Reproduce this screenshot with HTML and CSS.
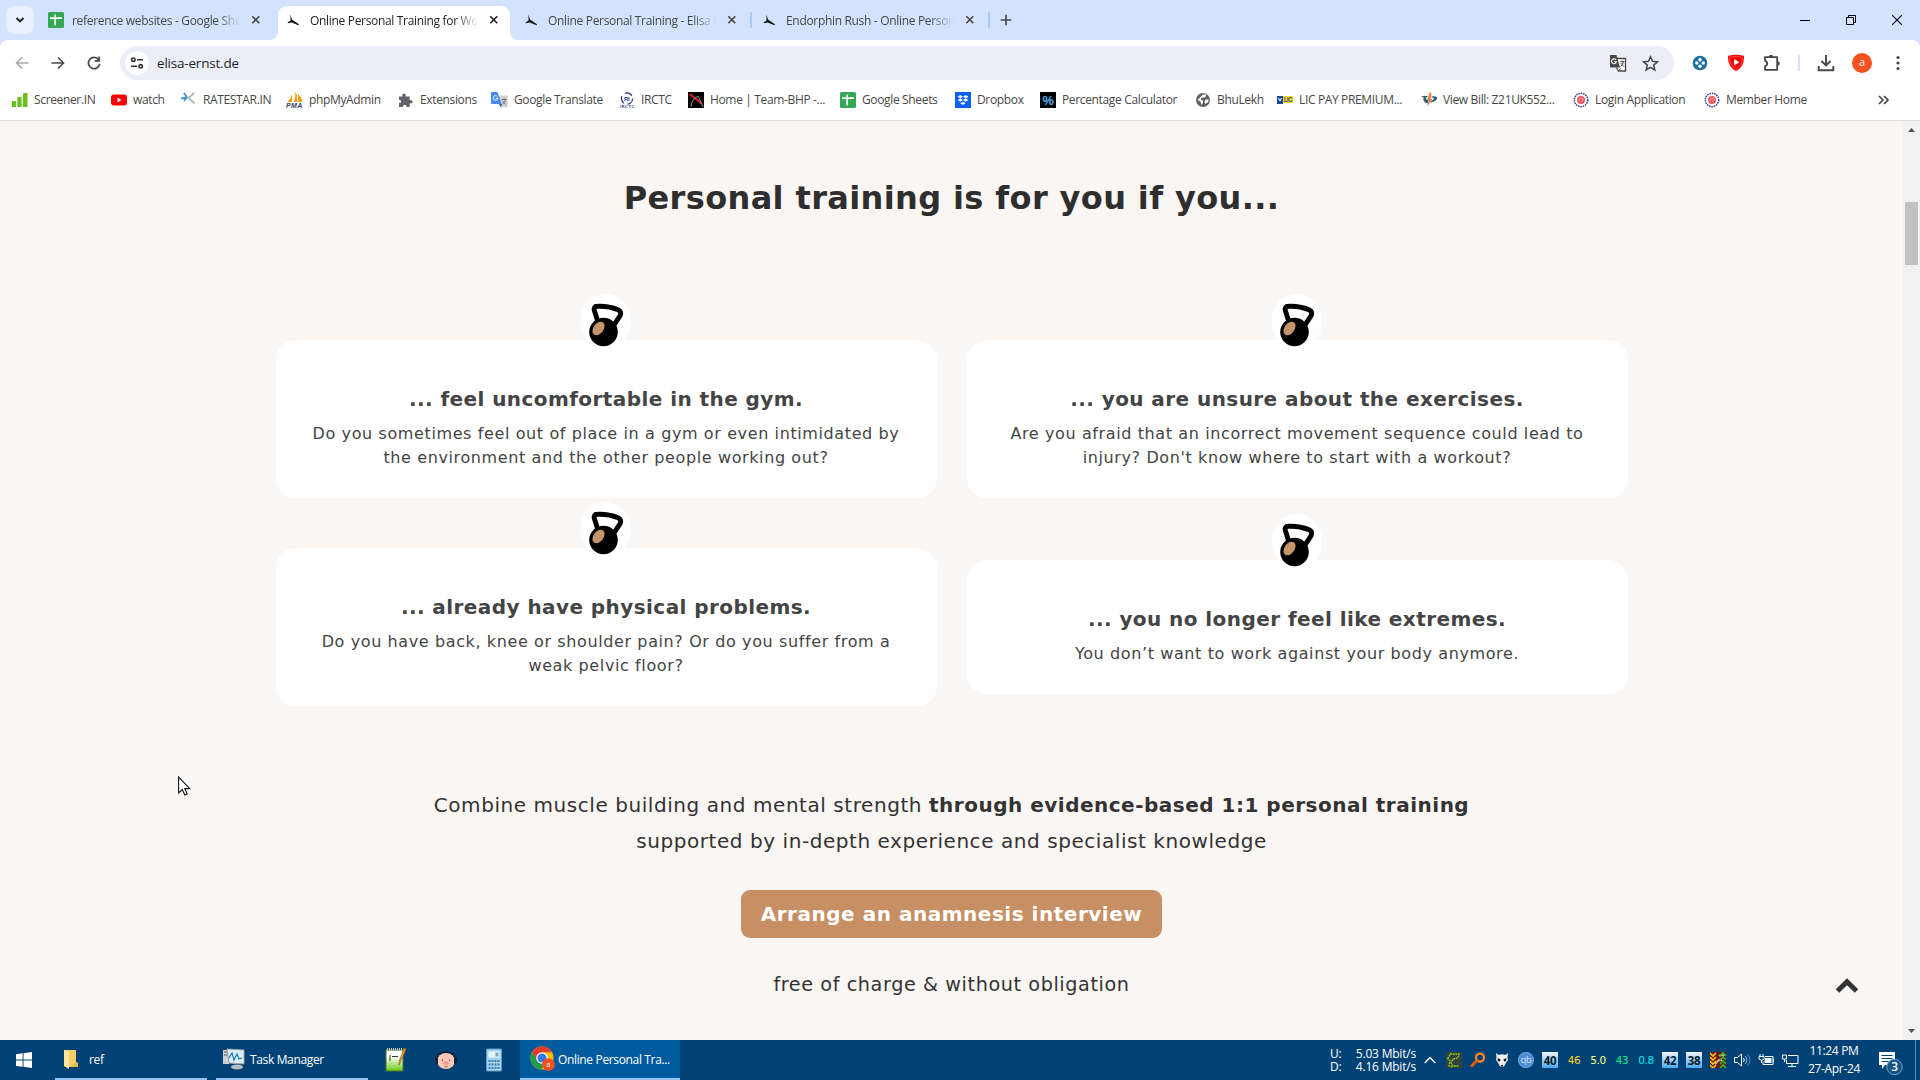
FILE: index.html
```
<!DOCTYPE html>
<html lang="en">
<head>
<meta charset="utf-8">
<title>Online Personal Training for Women</title>
<link rel="stylesheet" href="styles.css">
</head>
<body>
<svg class="defs" width="0" height="0">
  <symbol id="sheets" viewBox="0 0 16 16"><rect width="16" height="16" rx="1.5" fill="#34a853"/><path d="M7.2 2.5v11M2 6.2h12" stroke="#fff" stroke-width="1.7"/></symbol>
  <symbol id="elisa" viewBox="0 0 16 16"><path d="M4.500 2.500L6 7.500 13 12.200 12.500 13.200 5.500 10.500 2 11.300 1.500 10.500 4.500 8.500z" fill="#181818"/></symbol>
  <symbol id="close" viewBox="0 0 10 10"><path d="M1.300 1.300l7 7M8.300 1.300l-7 7" stroke="currentColor" stroke-width="1.600"/></symbol>
  <symbol id="kettlebell" viewBox="0 0 50 54"><path d="M17 28L13.500 17q-1.500-4.700 3-4.700 11-.5 20.500 3.500 4 2 2 6l-6 9" fill="none" stroke="#000" stroke-width="4.900" stroke-linejoin="round"/><circle cx="22.500" cy="38" r="14.300"/><ellipse cx="17.500" cy="34.500" rx="5" ry="7.600" transform="rotate(37 17.500 34.500)" fill="#c4966a"/></symbol>
  <symbol id="seal" viewBox="0 0 16 16"><circle cx="8" cy="8" r="6.700" fill="#fff" stroke="#27408b" stroke-width="1.500" stroke-dasharray="1.500 .9"/><circle cx="8" cy="8" r="4" fill="#ee5560"/><path d="M5.500 9l2-3 3 1-2.500 3" stroke="#fff" stroke-opacity=".6" fill="none" stroke-width=".8"/></symbol>
</svg>

<header class="browser">
  <div class="tabstrip">
    <div class="tab-search"><svg width="10" height="10" viewBox="0 0 10 10"><path d="M1.500 3l3.500 3.500L8.500 3" fill="none" stroke="#1f1f1f" stroke-width="1.900"/></svg></div>
    <div class="tab tab-first"><svg width="16" height="16"><use href="#sheets"/></svg><span class="tab-title">reference websites - Google Sheets</span><svg class="x" width="10" height="10"><use href="#close"/></svg></div>
    <div class="tab tab-active"><svg width="16" height="16"><use href="#elisa"/></svg><span class="tab-title">Online Personal Training for Women</span><svg class="x" width="10" height="10"><use href="#close"/></svg></div>
    <div class="tab"><svg width="16" height="16"><use href="#elisa"/></svg><span class="tab-title">Online Personal Training - Elisa Ernst</span><svg class="x" width="10" height="10"><use href="#close"/></svg></div>
    <div class="tab-sep"></div>
    <div class="tab tab-last"><svg width="16" height="16"><use href="#elisa"/></svg><span class="tab-title">Endorphin Rush - Online Personal</span><svg class="x" width="10" height="10"><use href="#close"/></svg></div>
    <div class="tab-sep"></div>
    <svg class="new-tab" width="12" height="12" viewBox="0 0 12 12"><path d="M6 .7v10.600M.7 6h10.600" stroke="#474747" stroke-width="1.700"/></svg>
    <div class="window-controls">
      <svg width="10" height="10" viewBox="0 0 10 10"><path d="M0 5.500h10" stroke="#000"/></svg>
      <svg width="10" height="10" viewBox="0 0 10 10"><path d="M.5 2.500h7v7h-7zM2.500 2.500v-2h7v7h-2" fill="none" stroke="#000"/></svg>
      <svg width="10" height="10" viewBox="0 0 10 10"><path d="M0 0l10 10M10 0L0 10" stroke="#000" stroke-width="1.100"/></svg>
    </div>
  </div>

  <div class="toolbar">
    <div class="nav">
      <svg width="16" height="16" viewBox="0 0 16 16"><path d="M14.500 8H2.500M8 2.500L2.500 8 8 13.500" fill="none" stroke="#a5a7aa" stroke-width="1.500"/></svg>
      <svg width="16" height="16" viewBox="0 0 16 16"><path d="M1.500 8h12M8 2.500L13.500 8 8 13.500" fill="none" stroke="#474747" stroke-width="1.600"/></svg>
      <svg width="16" height="16" viewBox="0 0 16 16"><path d="M12.600 4.800A5.600 5.600 0 1 0 13.600 8.800" fill="none" stroke="#474747" stroke-width="1.700"/><path d="M13.900 1.500v5.200H8.700V5h3.500V1.500z" fill="#474747"/></svg>
    </div>
    <div class="omnibox">
      <div class="site-info"><svg width="14" height="14" viewBox="0 0 14 14" fill="none" stroke="#303134" stroke-width="1.600"><circle cx="3.300" cy="3.700" r="1.700"/><path d="M7 3.700h6M1 10.300h6"/><circle cx="10.700" cy="10.300" r="1.700"/></svg></div>
      <span class="url">elisa-ernst.de</span>
      <svg class="omni-translate" width="18" height="18" viewBox="0 0 18 18"><path d="M7 4.500h9.500V17H9.500L7.500 13.500" fill="#fff" stroke="#474747" stroke-width="1.300"/><path d="M1 1h6.500l3.500 12.500H2q-1 0-1-1z" fill="#474747"/><path d="M7 6A2.400 2.400 0 1 0 7.300 7.800H5.200" fill="none" stroke="#fff" stroke-width="1.100"/><path d="M11 7.700h4.500M13.200 6.700v1M14.500 8q-.8 3-3 4.500M11.700 9l3.300 3.700M10 16.500l1.500-2" fill="none" stroke="#474747"/></svg>
      <svg width="17" height="17" viewBox="0 0 17 17"><path d="M8.500 1.800l2 4.500 5 .5-3.800 3.300 1.100 4.900-4.300-2.600L4.200 15l1.100-4.900L1.500 6.800l5-.5z" fill="none" stroke="#474747" stroke-width="1.500"/></svg>
    </div>
    <div class="actions">
      <svg width="16" height="16" viewBox="0 0 16 16"><circle cx="8" cy="8" r="7.300" fill="#216f9e"/><g fill="#fff"><circle cx="8" cy="4.800" r="1.700"/><circle cx="8" cy="11.200" r="1.700"/><circle cx="4.800" cy="8" r="1.700"/><circle cx="11.200" cy="8" r="1.700"/></g></svg>
      <svg width="18" height="18" viewBox="0 0 18 18"><path d="M1 2q8-2.500 16 0 .5 10.500-8 15Q.5 12.500 1 2z" fill="#f90000"/><path d="M2.600 3.200q6.400-1.700 12.800 0 .2 8-6.400 12Q2.400 11.200 2.600 3.200z" fill="none" stroke="#ff7777" stroke-width=".6"/><path d="M7 5l5.500 3.300L7 11.600z" fill="#fff"/></svg>
      <svg width="18" height="18" viewBox="0 0 18 18"><path d="M2 3.200h12.200v12.600H2v-3.600q2.200-.6 2.200-2.700T2 6.800z" fill="none" stroke="#474747" stroke-width="1.800" stroke-linejoin="round"/><path d="M5.800 3q0-2.200 2.200-2.200T10.200 3zM14.500 7.300q2.200 0 2.200 2.200t-2.200 2.200z" fill="#474747"/></svg>
      <i class="action-sep"></i>
      <svg width="18" height="18" viewBox="0 0 18 18"><path d="M9 1v10M4.500 7L9 11.500 13.500 7M1.700 12v4.200h14.600V12" fill="none" stroke="#474747" stroke-width="1.900"/></svg>
      <span class="avatar">a</span>
      <svg width="6" height="16" viewBox="0 0 6 16" fill="#474747"><circle cx="3" cy="2.500" r="1.600"/><circle cx="3" cy="8" r="1.600"/><circle cx="3" cy="13.500" r="1.600"/></svg>
    </div>
  </div>

  <nav class="bookmarks">
    <a class="bm"><svg width="16" height="16" viewBox="0 0 16 16" fill="#65c31c"><rect y="9" width="4" height="6" rx=".6"/><rect x="5.300" y="5" width="4.300" height="10" rx=".6"/><rect x="11" y="1" width="4.500" height="14" rx=".6"/></svg><span>Screener.IN</span></a>
    <a class="bm"><svg width="16" height="16" viewBox="0 0 16 16"><rect y="2.500" width="16" height="11" rx="3" fill="#f00"/><path d="M6.500 5.500l4 2.500-4 2.500z" fill="#fff"/></svg><span>watch</span></a>
    <a class="bm"><svg width="16" height="16" viewBox="0 0 16 16"><path d="M3 1l3 4.500L3 9M5.500 5.500L0 6.500" fill="none" stroke="#3b9bd3" stroke-width="1.800"/><path d="M13 1L7.500 6l6 5.500" fill="none" stroke="#b3b8bd" stroke-width="2"/></svg><span>RATESTAR.IN</span></a>
    <a class="bm"><svg width="17" height="16" viewBox="0 0 17 16"><path d="M6 2v8H1q4-3 5-8zM9 0q1 5-1 10h3V3zM12 2q4 3 4 8h-4z" fill="#f89c0e"/><text x="0" y="15.500" font-family="Liberation Sans" font-size="7" font-weight="700" font-style="italic" fill="#39396b" textLength="16">PMA</text></svg><span>phpMyAdmin</span></a>
    <a class="bm"><svg width="16" height="16" viewBox="0 0 16 16"><path d="M1 4.500h3.500Q4 1.500 6 1.500t1.700 3h4V8q3 0 3 1.700t-3 1.700v3.600H8.500q0-2.300-1.700-2.300T5 15H1v-4q2.200 0 2.200-1.600T1 7.700z" fill="#5f6368"/></svg><span>Extensions</span></a>
    <a class="bm"><svg width="17" height="16" viewBox="0 0 17 16"><path d="M7 3.500h9q.8 0 .8.800v11H9.500z" fill="#d3d3d3"/><path d="M1 0h5.500l4 12H1q-1 0-1-1V1q0-1 1-1z" fill="#4788f2"/><path d="M8 12h3l-1.500 3.500z" fill="#3060bd"/><path d="M6.300 4.500A2.300 2.300 0 1 0 6.800 6.300H4.700" fill="none" stroke="#fff"/><path d="M10.500 7.500h5M13 6.300v1.200M14.500 8q-1 2.700-3 4M11.500 9l3 3.500" fill="none" stroke="#647078"/></svg><span>Google Translate</span></a>
    <a class="bm"><svg width="16" height="16" viewBox="0 0 16 16"><circle cx="8" cy="6.500" r="5.600" fill="none" stroke="#32368c" stroke-width="1.200" stroke-dasharray="8 3.700"/><text x="5" y="8.500" font-family="Liberation Sans" font-size="6" font-weight="700" fill="#32368c">RI</text><text x="1" y="16" font-family="Liberation Sans" font-size="4" font-weight="700" fill="#32368c" textLength="14">IRCTC</text></svg><span>IRCTC</span></a>
    <a class="bm"><svg width="16" height="16" viewBox="0 0 16 16"><path d="M0 0h16v16H0z"/><path d="M2 2l12 10" stroke="#e41b23" stroke-width="2.200"/><path d="M10 4Q3 8 3 15M10 4q2 4 5 11" stroke="#8b8b8b" fill="none"/></svg><span>Home | Team-BHP -...</span></a>
    <a class="bm"><svg width="16" height="16"><use href="#sheets"/></svg><span>Google Sheets</span></a>
    <a class="bm"><svg width="16" height="16" viewBox="0 0 16 16"><path d="M0 0h16v16H0z" fill="#0a5fff"/><path d="M5.300 3L8 4.700 5.300 6.400 2.600 4.700zM10.700 3l2.700 1.700-2.700 1.700L8 4.700zM5.300 6.400L8 8.100 5.300 9.800 2.600 8.100zM10.700 6.400l2.700 1.700-2.700 1.700L8 8.100zM8 9.700l2.600 1.600L8 13l-2.600-1.700z" fill="#fff"/></svg><span>Dropbox</span></a>
    <a class="bm"><svg width="16" height="16" viewBox="0 0 16 16"><path d="M0 0h16v16H0z"/><text x="2.500" y="12.500" font-family="Liberation Sans" font-size="13" fill="#52b4ee" font-weight="700" textLength="11" lengthAdjust="spacingAndGlyphs">%</text></svg><span>Percentage Calculator</span></a>
    <a class="bm"><svg width="16" height="16" viewBox="0 0 16 16"><circle cx="8" cy="8" r="7" fill="#5f6368"/><path d="M8 2.500h3.500L10 5.500H7L5.500 7.500 8 8.500v2L6.500 13 5.500 9.500 2.500 8M10.500 7.500h3v2l-3 2.500-1-2z" fill="#fff"/></svg><span>BhuLekh</span></a>
    <a class="bm"><svg width="16" height="16" viewBox="0 0 16 16"><path d="M0 4h6v8H0z" fill="#164c95"/><path d="M6 4h10v7H6z" fill="#f7d616"/><path d="M1.500 6l1.500 3 1.500-3" fill="none" stroke="#fff"/><text x="7" y="10" font-family="Liberation Sans" font-size="6.500" font-weight="700" fill="#164c95" textLength="8" lengthAdjust="spacingAndGlyphs">LIC</text></svg><span>LIC PAY PREMIUM...</span></a>
    <a class="bm"><svg width="16" height="16" viewBox="0 0 16 16"><path d="M0 4h7L5.500 5.500H4.500q1 3 3.500 3l-1.500 3-2.500-1Q1.500 8 2.500 5.500zM10 4.500q6-1 6 1.500 0 3-6 4.500l-1-1q4-1.500 4-3z" fill="#2b6078"/><path d="M9 0L6 8h2l-2 7 5.500-8h-2l1-5z" fill="#fa8038"/></svg><span>View Bill: Z21UK552...</span></a>
    <a class="bm"><svg width="16" height="16"><use href="#seal"/></svg><span>Login Application</span></a>
    <a class="bm"><svg width="16" height="16"><use href="#seal"/></svg><span>Member Home</span></a>
    <svg class="overflow" width="11" height="10" viewBox="0 0 11 10"><path d="M1 1l4 4-4 4M6 1l4 4-4 4" fill="none" stroke="#474747" stroke-width="1.700"/></svg>
  </nav>
</header>

<div class="viewport">
  <main class="page">
    <h1>Personal training is for you if you...</h1>
    <section class="cards">
      <article class="card"><span class="badge"><svg width="50" height="54"><use href="#kettlebell"/></svg></span><h2>... feel uncomfortable in the gym.</h2><p>Do you sometimes feel out of place in a gym or even intimidated by<br>the environment and the other people working out?</p></article>
      <article class="card"><span class="badge"><svg width="50" height="54"><use href="#kettlebell"/></svg></span><h2>... you are unsure about the exercises.</h2><p>Are you afraid that an incorrect movement sequence could lead to<br>injury? Don't know where to start with a workout?</p></article>
      <article class="card"><span class="badge"><svg width="50" height="54"><use href="#kettlebell"/></svg></span><h2>... already have physical problems.</h2><p>Do you have back, knee or shoulder pain? Or do you suffer from a<br>weak pelvic floor?</p></article>
      <article class="card"><span class="badge"><svg width="50" height="54"><use href="#kettlebell"/></svg></span><h2>... you no longer feel like extremes.</h2><p>You don’t want to work against your body anymore.</p></article>
    </section>
    <p class="lead">Combine muscle building and mental strength <b>through evidence-based 1:1 personal training</b><br>supported by in-depth experience and specialist knowledge</p>
    <a class="cta">Arrange an anamnesis interview</a>
    <p class="note">free of charge &amp; without obligation</p>
    <svg class="to-top" width="24" height="16" viewBox="0 0 24 16"><path d="M2.500 13L12 3.700 21.500 13" fill="none" stroke="#333" stroke-width="5"/></svg>
    <svg class="cursor" width="14" height="21" viewBox="0 0 14 21"><path d="M.6 1v16l3.700-3.500L6.800 19l2.400-1.100-2.400-5.300h5z" fill="#fff" stroke="#14141e" stroke-width="1.100"/></svg>
  </main>
  <div class="scrollbar">
    <svg width="7" height="4" viewBox="0 0 7 4"><path d="M0 4l3.500-4L7 4z" fill="#505050"/></svg>
    <div class="thumb"></div>
    <svg class="down" width="7" height="4" viewBox="0 0 7 4"><path d="M0 0l3.500 4L7 0z" fill="#505050"/></svg>
  </div>
</div>

<footer class="taskbar">
  <div class="start"><svg width="16" height="16" viewBox="0 0 16 16" fill="#fff"><path d="M0 2.200L6.600 1.300v6.300H0zM7.500 1.200L16 0v7.600H7.500zM0 8.500h6.600v6.300L0 13.900zM7.500 8.500H16V16l-8.500-1.200z"/></svg></div>
  <div class="task task-ref"><svg width="16" height="22" viewBox="0 0 16 22"><path d="M1 2h12v12l2 1v4H6L1 18z" fill="#f5cf6a"/><path d="M1 2l5 2v17l-5-3z" fill="#ffe69a"/><path d="M13 14l2 1v4H7z" fill="#e8b94c"/></svg><span>ref</span></div>
  <div class="task task-manager"><svg width="24" height="24" viewBox="0 0 24 24"><path d="M1 3h6v14H1z" fill="#cfd2d5"/><path d="M2 5h3M2 8h3" stroke="#555"/><path d="M5 2l17 1v14l-15-1z" fill="#e9eef2" stroke="#99a3aa"/><path d="M7 4l13 1v10L8 14z" fill="#d5eefa"/><path d="M7 11l3-5 2 7 3-6 2 5 3-1" fill="none" stroke="#2178b5" stroke-width="1.200"/><ellipse cx="15" cy="20" rx="6" ry="2.500" fill="#b9bdc0"/></svg><span>Task Manager</span></div>
  <div class="quick">
    <svg width="24" height="26" viewBox="0 0 24 26"><defs><linearGradient id="npp" x2="0" y2="1"><stop offset=".3" stop-color="#fff"/><stop offset="1" stop-color="#6ac811"/></linearGradient></defs><path d="M2 3h17v21H2z" fill="url(#npp)" stroke="#52702c"/><path d="M3 2h15" stroke="#ccc" stroke-width="2" stroke-dasharray="1 1"/><path d="M6 8v6M8 9.500h6" stroke="#333"/><path d="M22 2l-6 14-1 2v-3L20 1z" fill="#f3aa33" stroke="#925a20" stroke-width=".7"/></svg>
    <svg width="24" height="24" viewBox="0 0 24 24"><path d="M3 11C5 2 19 2 21 11" fill="none" stroke="#0c1d33" stroke-width="2"/><ellipse cx="12" cy="13" rx="9" ry="8" fill="#fac9b5"/><path d="M1 10q2-2 3 0v6q-3 1-3-6zM23 10q-2-2-3 0v6q3 1 3-6z" fill="#12243b"/><path d="M8.500 11.500v1.500M15.500 11.500v1.500" stroke="#6c3b33" fill="none"/><ellipse cx="12" cy="15" rx="3" ry="1.800" fill="#f19a91"/><path d="M10.500 18.500q1.500 1 3 0" stroke="#a85349" fill="none"/></svg>
    <svg width="18" height="24" viewBox="0 0 18 24"><rect x=".5" y="1" width="15" height="22" rx="1" fill="#a8d3ee" stroke="#5b9dc6"/><path d="M2.500 3.500h11v6h-11z" fill="#e6f6ff"/><path d="M9.500 4.500h3v4h-3z" fill="#79a2bc"/><path d="M2.500 13h11M2.500 16.500h11M2.500 20h11" stroke="#397eac" stroke-width="2" stroke-dasharray="2 1"/></svg>
  </div>
  <div class="task task-chrome"><svg width="26" height="26" viewBox="0 0 26 26"><circle cx="12" cy="12" r="11.500" fill="#fbbc05"/><path d="M2 6.300A11.500 11.500 0 0 1 22 6.300H12L7 14.500z" fill="#e33b2e"/><path d="M2 6.300A11.500 11.500 0 0 0 11.500 23.500l5-8.500-9-1z" fill="#219b4a"/><circle cx="12" cy="12" r="5.800" fill="#fff"/><circle cx="12" cy="12" r="4.600" fill="#3979e5"/><circle cx="18.500" cy="18.500" r="6.300" fill="#f4511e"/><text x="16.500" y="21" font-family="Open Sans" font-size="7" fill="#fff">a</text></svg><span>Online Personal Tra...</span></div>
  <div class="net"><span>U:</span><span>5.03 Mbit/s</span><span>D:</span><span>4.16 Mbit/s</span></div>
  <div class="tray">
    <i><svg width="12" height="8" viewBox="0 0 12 8"><path d="M.7 7L6 1.500 11.300 7" fill="none" stroke="#fff" stroke-width="1.300"/></svg></i>
    <i><svg width="16" height="16" viewBox="0 0 16 16"><path d="M0 0h16v16H0z" fill="#3a4040"/><path d="M2 7l2-5 9 0-1 4-5 1-2 4 2 3 6 0M1 6l3 3-1 5 4 1" fill="none" stroke="#75d51c" stroke-width="1.300" stroke-dasharray="2 .7"/></svg></i>
    <i><svg width="16" height="16" viewBox="0 0 16 16"><circle cx="10" cy="5.500" r="4" fill="none" stroke="#fb8620" stroke-width="2.300"/><path d="M7 8.500L1 14.500" stroke="#e85b09" stroke-width="3"/></svg></i>
    <i><svg width="16" height="16" viewBox="0 0 16 16"><path d="M2 1l2.500 2q3.500-1.500 7 0L14 1l-.5 4 .5 3-2 2.500-2 4H6l-2-4L2 8l.5-3z" fill="#f1f1f1"/><path d="M3.500 6l3 1.500L6 9.500 4 9zM12.500 6l-3 1.500.5 2 2-.5z"/><path d="M6.500 13h3l-1.500 2z" fill="#222"/></svg></i>
    <i><svg width="16" height="16" viewBox="0 0 16 16"><circle cx="8" cy="8" r="7.700" fill="#4c8cd8" stroke="#9ec6f3" stroke-width=".6"/><text x="2.500" y="11" font-family="Open Sans" font-size="9.500" fill="#d3e8ff" textLength="11">qb</text></svg></i>
    <i><b class="chip">40</b></i>
    <i class="t-amber">46</i><i class="t-yellow">5.0</i><i class="t-green">43</i><i class="t-cyan">0.8</i>
    <i><b class="chip">42</b></i><i><b class="chip">38</b></i>
    <i><svg width="16" height="16" viewBox="0 0 16 16"><path d="M0 0h16v16H0z" fill="#6d1711"/><path d="M9 4q3-2 5 0M5 12l4-4h3" stroke="#f4a49a" stroke-width="2" fill="none"/><path d="M0 1l3 3 3-3M0 5l3 3 3-3M0 9l3 3 3-3M0 13l3 3 3-3" fill="none" stroke="#f5c817" stroke-width="1.600"/><path d="M10 4l3-3 3 3M10 8l3-3 3 3M10 12l3-3 3 3M10 16l3-3 3 3" fill="none" stroke="#25c32b" stroke-width="1.600"/></svg></i>
    <i><svg width="17" height="16" viewBox="0 0 17 16" fill="none" stroke="#fff"><path d="M.5 5.500h3l4-3.500v12l-4-3.500h-3z"/><path d="M9.500 6q1.500 2 0 4"/><path d="M11.500 4q3 4 0 8" stroke-opacity=".65"/><path d="M13.500 2q5 6 0 12" stroke-opacity=".4"/></svg></i>
    <i><svg width="17" height="16" viewBox="0 0 17 16" fill="none" stroke="#fff"><path d="M7 4.500h8v8H5v-3M15.500 7v3"/><path d="M7 6h6.500v5H6.500V9z" fill="#fff" stroke="none"/><path d="M2 2v2M5 2v2M1 4.500h5V7L3.500 8.500 1 7zM3.500 8v3"/></svg></i>
    <i><svg width="17" height="16" viewBox="0 0 17 16" fill="none" stroke="#fff"><path d="M6 3.500h10v8H4.500V8M10 11.500v3M6 14.500h8"/><path d="M.5 3h4v4h-4zM2.500 7v3"/></svg></i>
  </div>
  <div class="clock"><span>11:24 PM</span><span>27-Apr-24</span></div>
  <svg class="notify" width="26" height="26" viewBox="0 0 26 26"><path d="M1 2h16v13H7l-3 4v-4H1z" fill="#fff"/><path d="M3.500 5.500h11M3.500 8.500h11M3.500 11.500h7" stroke="#004275"/><circle cx="16.500" cy="17" r="7.700" fill="#155487" stroke="#71a2ca"/><text x="13.300" y="21.300" font-family="Open Sans" font-size="12" font-weight="600" fill="#fff">3</text></svg>
  <div class="show-desktop"></div>
</footer>
</body>
</html>
```
FILE: styles.css
```
* { box-sizing: border-box; }
body { margin: 0; width: 1920px; height: 1080px; overflow: hidden; display: flex; flex-direction: column; font-family: "Open Sans", "Noto Sans", sans-serif; }
svg { display: block; flex: none; }
.defs { position: absolute; }
h1, h2, p { margin: 0; }

.browser { height: 121px; flex: none; background: #d3e3fd; }
.tabstrip { height: 40px; display: flex; align-items: center; padding-left: 6px; font-size: 12px; color: #474747; }
.tab-search { width: 28px; height: 28px; border-radius: 9px; background: #e9f1fe; display: flex; align-items: center; justify-content: center; margin-right: 14px; }
.tab { display: flex; align-items: center; height: 34px; align-self: flex-end; padding-bottom: 6px; padding-top: 0; }
.tab-title { width: 168px; margin: 0 11px 0 8px; padding-top: 2px; overflow: hidden; white-space: nowrap; letter-spacing: -.32px; line-height: 18px; mask-image: linear-gradient(90deg, #000 145px, transparent 168px); }
.tab-first { width: 230px; }
.tab-active { position: relative; width: 232px; height: 34px; padding-left: 8px; background: #fff; border-radius: 9px 9px 0 0; color: #1f1f1f; }
.tab-active::before, .tab-active::after { content: ""; position: absolute; bottom: 0; width: 9px; height: 9px; }
.tab-active::before { left: -9px; background: radial-gradient(circle at 0 0, transparent 9px, #fff 9.500px); }
.tab-active::after { right: -9px; background: radial-gradient(circle at 100% 0, transparent 9px, #fff 9.500px); }
.tab-active + .tab { margin-left: 14px; }
.tab-sep { width: 2px; height: 16px; background: #a8c7fa; margin: 0 10px 0 13px; }
.window-controls { margin-left: auto; display: flex; gap: 36px; padding-right: 18px; }

.toolbar { height: 40px; background: #fff; border-radius: 8px 8px 0 0; display: flex; align-items: center; padding: 6px 0 0; }
.nav { display: flex; gap: 20px; padding-left: 14px; width: 120px; }
.omnibox { width: 1554px; height: 34px; border-radius: 17px; background: #ebeef8; display: flex; align-items: center; padding: 0 15px 0 5px; }
.site-info { width: 24px; height: 24px; border-radius: 50%; background: #fff; display: flex; align-items: center; justify-content: center; }
.url { margin: 0 auto 0 8px; font-size: 13.500px; letter-spacing: -.2px; color: #1f1f1f; }
.omni-translate { margin-right: 15px; }
.actions { display: flex; align-items: center; padding-left: 18px; }
.actions svg:nth-of-type(2) { margin-left: 19px; }
.actions svg:nth-of-type(3) { margin-left: 18px; }
.action-sep { width: 2px; height: 16px; background: #d3e3fd; margin: 0 17px 0 17px; }
.avatar { width: 20px; height: 20px; border-radius: 50%; background: #f4511e; color: #fff; font-size: 11px; line-height: 18px; text-align: center; margin: 0 23px 0 17px; }

.bookmarks { height: 41px; background: #fff; border-bottom: 1px solid #dcdcdc; padding-left: 12px; display: grid; align-items: center; grid-template-columns: 99px 70px 105px 112px 93px 128px 69px 152px 115px 85px 155px 82px 144px 152px 131px 174px 30px; }
.bm { display: flex; align-items: center; gap: 6px; font-size: 12px; line-height: 18px; letter-spacing: -.35px; color: #474747; white-space: nowrap; }

.viewport { flex: 1; min-height: 0; display: flex; background: #faf6f3; }
.page { position: relative; width: 1903px; text-align: center; font-family: "DejaVu Sans", sans-serif; color: #333; display: flex; flex-direction: column; align-items: center; white-space: nowrap; }
h1 { margin-top: 53px; font-size: 32px; line-height: 48px; letter-spacing: .37px; color: #2e2e2e; }
.cards { margin-top: 118px; width: 1352px; display: grid; grid-template-columns: 661px 661px; column-gap: 30px; row-gap: 50px; align-items: center; }
.card { position: relative; background: #fff; border-radius: 20px; padding: 44px 0 28px; color: #444; }
.badge { position: absolute; left: 305px; top: -46px; width: 50px; height: 54px; border-radius: 25px; background: #fff; }
h2 { font-size: 20px; line-height: 30px; letter-spacing: .43px; margin-bottom: 8px; }
.card p { font-size: 16px; line-height: 24px; letter-spacing: .61px; }
.lead { margin-top: 81px; font-size: 20px; line-height: 36px; letter-spacing: .56px; }
.lead b { letter-spacing: .5px; }
.cta { margin-top: 31px; width: 421px; height: 48px; border-radius: 9px; background: #c78f64; color: #fff; font-size: 20px; line-height: 49px; font-weight: 700; letter-spacing: .52px; }
.note { margin-top: 29px; font-size: 19.200px; line-height: 36px; letter-spacing: .6px; }
.to-top { position: absolute; left: 1835px; top: 857px; }
.cursor { position: absolute; left: 178px; top: 655px; }
.scrollbar { width: 17px; background: #f1f1f1; display: flex; flex-direction: column; align-items: center; padding: 7px 0; }
.thumb { width: 13px; height: 63px; margin-top: 70px; background: #c1c1c1; }
.down { margin-top: auto; }

.taskbar { height: 40px; flex: none; background: #004275; color: #fff; display: flex; align-items: center; font-size: 12px; }
.start { width: 55px; padding-left: 16px; }
.task { height: 40px; display: flex; align-items: center; border-bottom: 2px solid #93c4f5; white-space: nowrap; letter-spacing: -.35px; }
.task-ref { width: 152px; padding-left: 8px; gap: 10px; margin-right: 9px; }
.task-manager { width: 152px; padding-left: 6px; gap: 4px; }
.quick { width: 152px; display: flex; align-items: center; padding-left: 16px; gap: 26px; }
.quick svg:last-child { margin-left: 2px; }
.task-chrome { width: 160px; background: #005a9e; padding-left: 10px; gap: 2px; }
.net { margin-left: 650px; width: 86px; display: grid; grid-template-columns: 24px 62px; line-height: 13px; white-space: nowrap; letter-spacing: -.2px; }
.net span:nth-child(even) { text-align: right; }
.tray { display: flex; margin-left: 2px; }
.tray i { width: 24px; height: 24px; display: flex; align-items: center; justify-content: center; font: 10.500px "DejaVu Sans", sans-serif; letter-spacing: -.4px; }
.chip { width: 16px; height: 16px; font: 700 11.500px/17px "Open Sans", sans-serif; text-align: center; color: #0a1a2c; background: linear-gradient(#f2f8fe, #44aaf0); }
.t-amber { color: #ffd21c; } .t-yellow { color: #ffff85; } .t-green { color: #19e67e; } .t-cyan { color: #15e9ef; }
.clock { width: 64px; display: flex; flex-direction: column; text-align: center; line-height: 18px; letter-spacing: -.35px; white-space: nowrap; }
.notify { margin-left: 12px; margin-top: 5px; }
.show-desktop { width: 5px; height: 40px; margin-left: auto; border-left: 1px solid #5c88ab; }
```
